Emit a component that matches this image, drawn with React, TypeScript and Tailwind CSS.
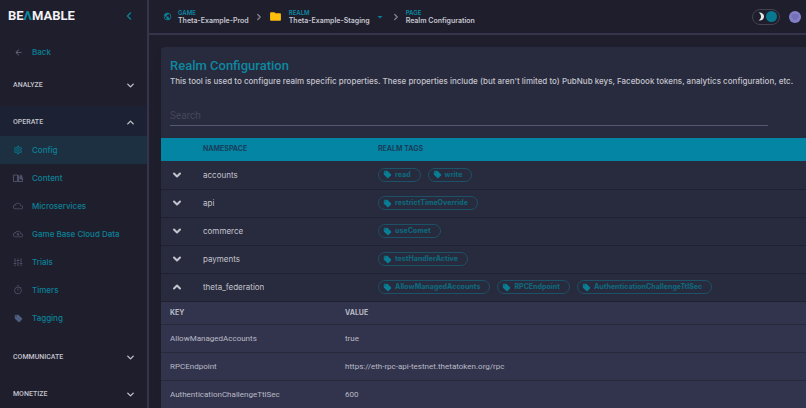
import { useState, type ReactNode } from "react";
import {
  MdArrowBack,
  MdArrowDropDown,
  MdFolder,
  MdLocalOffer,
  MdOutlineCloud,
  MdOutlineCloudUpload,
  MdOutlineSettings,
  MdOutlineTimer,
  MdPublic,
} from "react-icons/md";
import { ChevronDown, ChevronLeft, ChevronRight, ChevronUp } from "lucide-react";

const operateLinks = [
  { label: "Config", icon: <MdOutlineSettings size={10} />, active: true },
  { label: "Content", icon: <ContentIcon /> },
  { label: "Microservices", icon: <MdOutlineCloud size={10} /> },
  { label: "Game Base Cloud Data", icon: <MdOutlineCloudUpload size={10} /> },
  { label: "Trials", icon: <TrialsIcon /> },
  { label: "Timers", icon: <MdOutlineTimer size={10} /> },
  { label: "Tagging", icon: <MdLocalOffer size={9} className="text-[#4c5d80]" /> },
];

const namespaces = [
  { name: "accounts", tags: ["read", "write"] },
  { name: "api", tags: ["restrictTimeOverride"] },
  { name: "commerce", tags: ["useComet"] },
  { name: "payments", tags: ["testHandlerActive"] },
  {
    name: "theta_federation",
    tags: ["AllowManagedAccounts", "RPCEndpoint", "AuthenticationChallengeTtlSec"],
  },
];

const properties = [
  { key: "AllowManagedAccounts", value: "true" },
  { key: "RPCEndpoint", value: "https://eth-rpc-api-testnet.thetatoken.org/rpc" },
  { key: "AuthenticationChallengeTtlSec", value: "600" },
];

function ContentIcon() {
  return (
    <svg width="10" height="10" viewBox="0 0 20 20" fill="none" stroke="currentColor" strokeWidth="2">
      <path d="M1 4h8v13H1zM9 17h10V9M11 4v13" />
      <path d="M13 13V7l3-5 2.500 5v6z" fill="currentColor" stroke="none" />
    </svg>
  );
}

function TrialsIcon() {
  return (
    <svg width="10" height="10" viewBox="0 0 20 20" fill="none" stroke="currentColor" strokeWidth="2">
      <path d="M4 3v8M4 15v3M10 3v2M10 9v9M16 3v8M16 15v3M1.500 13h5M7.500 7h5M13.500 13h5" />
    </svg>
  );
}

function NavSection({ title, open = false }: { title: string; open?: boolean }) {
  const Chevron = open ? ChevronUp : ChevronDown;
  return (
    <button
      type="button"
      aria-expanded={open}
      className={`flex h-[30px] w-full items-center justify-between pl-[13px] pr-[11px] pt-[2px] font-[Roboto] text-[7px] font-medium text-[#c3c3cc] ${
        open ? "bg-[#1c2233]" : ""
      }`}
    >
      {title}
      <Chevron size={11} strokeWidth={3} />
    </button>
  );
}

function Sidebar() {
  return (
    <aside className="w-[149px] shrink-0 border-r-2 border-[#35344a] bg-[#1f1e2d]">
      <div className="flex h-8 items-center justify-between pl-2 pr-3">
        <a href="#" aria-label="Beamable" className="font-[Roboto] text-[13px] font-bold text-[#f2f2f5]">
          BE<span className="text-[#0a87a0]">Λ</span>MABLE
        </a>
        <button type="button" aria-label="Collapse menu" className="text-[#0a7f93]">
          <ChevronLeft size={12} strokeWidth={3} />
        </button>
      </div>

      <a href="#" className="mt-[6px] flex h-7 items-center gap-[9px] pl-[13px] text-[8px] font-medium text-[#0b8297]">
        <span className="flex w-[10px] justify-center text-[#6a6b7e]">
          <MdArrowBack size={9} />
        </span>
        Back
      </a>

      <nav className="mt-[3px] flex flex-col gap-[7px]">
        <NavSection title="ANALYZE" />
        <div className="pb-[2px]">
          <NavSection title="OPERATE" open />
          {operateLinks.map((link) => (
            <a
              key={link.label}
              href="#"
              className={`flex h-7 items-center gap-[9px] pl-[13px] text-[8px] font-medium text-[#0b8297] ${
                link.active ? "bg-[#1c3042]" : ""
              }`}
            >
              <span className={`flex w-[10px] justify-center ${link.active ? "text-[#0b7084]" : "text-[#4d5068]"}`}>
                {link.icon}
              </span>
              {link.label}
            </a>
          ))}
        </div>
        <NavSection title="COMMUNICATE" />
        <NavSection title="MONETIZE" />
      </nav>
    </aside>
  );
}

function Crumb({ label, value }: { label: string; value: string }) {
  return (
    <a href="#" className="flex flex-col whitespace-nowrap">
      <span className="text-[6px] font-semibold leading-[7px] text-[#0b8aa3]">{label}</span>
      <span className="text-[7px] font-semibold leading-[9px] text-[#c6c6cf]">{value}</span>
    </a>
  );
}

function Header() {
  const [dark, setDark] = useState(true);
  return (
    <header className="flex h-[35px] items-center border-b-2 border-[#35344a] bg-[#1f1e2d] pl-[14px] pr-[5px]">
      <MdPublic size={9} className="mr-[6px] text-[#0b7f96]" />
      <Crumb label="GAME" value="Theta-Example-Prod" />
      <ChevronRight size={10} strokeWidth={3} className="mx-[5px] text-[#85858f]" />
      <MdFolder size={13} className="mr-[7px] text-[#fdbf0c]" />
      <Crumb label="REALM" value="Theta-Example-Staging" />
      <MdArrowDropDown size={12} className="ml-1 text-[#0b7f96]" />
      <ChevronRight size={10} strokeWidth={3} className="mx-[5px] text-[#85858f]" />
      <Crumb label="PAGE" value="Realm Configuration" />

      <button
        type="button"
        role="switch"
        aria-checked={dark}
        aria-label="Dark mode"
        onClick={() => setDark(!dark)}
        className="ml-auto flex h-4 w-7 items-center justify-between rounded-full border border-[#45424f] pl-[5px] pr-[2px]"
      >
        <svg width="6" height="9" viewBox="0 0 6 9" fill="#e8e8ec">
          <path d="M0.500 0.500C3.500 0 6 1.800 6 4.500S3.500 9 0.500 8.500C2.200 7.600 3 6.200 3 4.500S2.200 1.400 0.500 0.500Z" />
        </svg>
        <span className="size-[11px] rounded-full bg-[#07788f]" />
      </button>
      <button type="button" aria-label="Account" className="ml-[9px]">
        <svg width="12" height="12" viewBox="0 0 12 12">
          <circle cx="6" cy="6" r="6" fill="#8480c6" />
          <path d="M2.500 4h7M2.500 6h7M4 8h4" stroke="#625eac" strokeWidth="1" />
        </svg>
      </button>
    </header>
  );
}

function Tag({ children }: { children: ReactNode }) {
  return (
    <span className="flex h-[14px] items-center gap-[3px] rounded-full border border-[#1b5268] pl-1 pr-[9px] text-[7px] font-extrabold text-[#10667a]">
      <MdLocalOffer size={9} className="text-[#087d93]" />
      {children}
    </span>
  );
}

function PropertyTable() {
  return (
    <table className="w-full table-fixed border-collapse bg-[#32344d] text-left font-[Roboto] text-[8px] text-[#b9bac6]">
      <colgroup>
        <col className="w-[175px]" />
        <col />
      </colgroup>
      <thead>
        <tr className="h-[23px] border-b border-[#27293c] font-[Inter] text-[7px]">
          <th className="pl-[9px] font-bold">KEY</th>
          <th className="pl-[9px] font-bold">VALUE</th>
        </tr>
      </thead>
      <tbody>
        {properties.map((property) => (
          <tr key={property.key} className="h-7 border-b border-[#27293c]">
            <td className="pl-[9px]">{property.key}</td>
            <td className="pl-[9px]">{property.value}</td>
          </tr>
        ))}
      </tbody>
    </table>
  );
}

function NamespaceTable() {
  const [open, setOpen] = useState("theta_federation");
  return (
    <table className="w-full table-fixed border-collapse text-left text-[8px] text-[#c3c4cd]">
      <colgroup>
        <col className="w-[33px]" />
        <col className="w-[175px]" />
        <col />
      </colgroup>
      <thead>
        <tr className="h-[23px] bg-[#0485a3] text-[7px] text-[#173f5c]">
          <th aria-label="Expand" />
          <th className="pl-[9px] font-bold">NAMESPACE</th>
          <th className="pl-[9px] font-bold">REALM TAGS</th>
        </tr>
      </thead>
      {namespaces.map(({ name, tags }) => (
        <tbody key={name}>
          <tr className="h-7 border-b border-[#1f2030]">
            <td>
              <button
                type="button"
                aria-label={`Toggle ${name}`}
                aria-expanded={open === name}
                onClick={() => setOpen(open === name ? "" : name)}
                className="ml-[10px] block"
              >
                {open === name ? <ChevronUp size={12} strokeWidth={4} /> : <ChevronDown size={12} strokeWidth={4} />}
              </button>
            </td>
            <td className="pl-[9px]">{name}</td>
            <td className="pl-[9px]">
              <div className="flex gap-[7px]">
                {tags.map((tag) => (
                  <Tag key={tag}>{tag}</Tag>
                ))}
              </div>
            </td>
          </tr>
          {open === name && (
            <tr>
              <td colSpan={3}>
                <PropertyTable />
              </td>
            </tr>
          )}
        </tbody>
      ))}
    </table>
  );
}

export default function App() {
  return (
    <div className="flex h-screen overflow-hidden bg-[#1f1e2c] font-[Inter,sans-serif]">
      <Sidebar />
      <div className="flex min-w-0 flex-1 flex-col">
        <Header />
        <main className="min-h-0 flex-1 overflow-hidden pl-3 pt-3">
          <section className="rounded-tl bg-[#282a3d] shadow-lg">
            <div className="pb-3 pl-[9px] pt-[11px]">
              <h1 className="font-[Roboto] text-[13px] font-medium leading-4 text-[#0c88a0]">Realm Configuration</h1>
              <p className="text-[8px] font-medium leading-[14px] text-[#c3c4cd]">
                This tool is used to configure realm specific properties. These properties include (but aren't limited
                to) PubNub keys, Facebook tokens, analytics configuration, etc.
              </p>
              <input
                type="search"
                aria-label="Search"
                placeholder="Search"
                className="mt-[18px] block h-5 w-[calc(100%-38px)] border-b border-[#515a72] bg-transparent font-[Roboto] text-[10px] text-[#c3c4cd] outline-none placeholder:text-[#45475c]"
              />
            </div>
            <NamespaceTable />
          </section>
        </main>
      </div>
    </div>
  );
}
